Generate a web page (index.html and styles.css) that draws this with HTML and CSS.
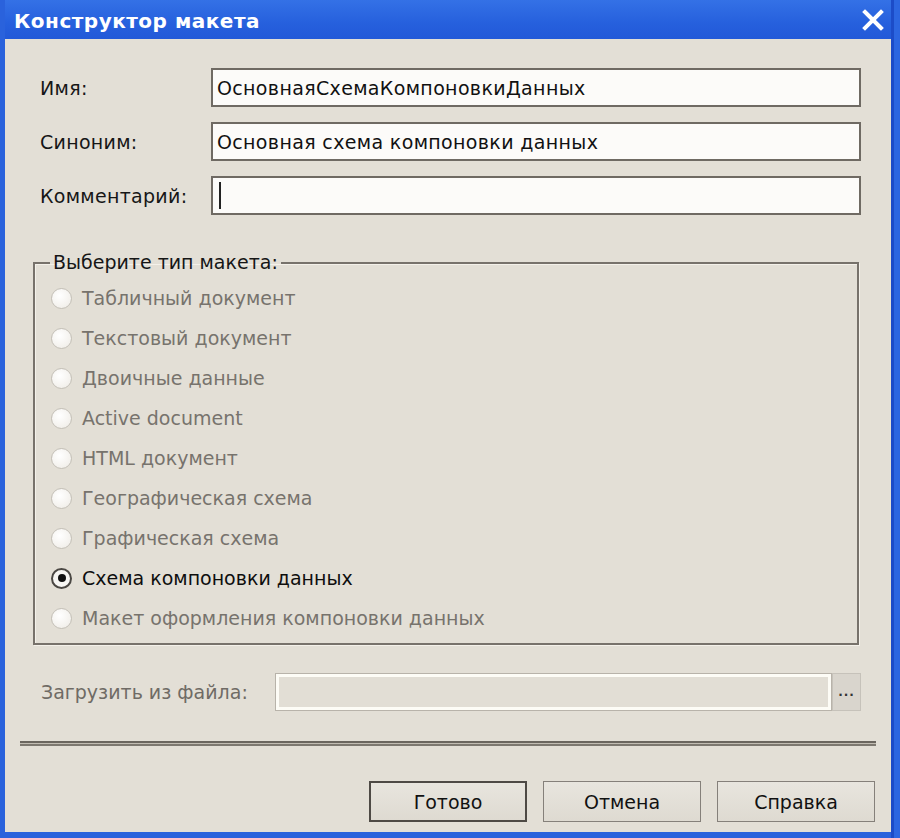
FILE: index.html
```html
<!DOCTYPE html>
<html lang="ru">
<head>
  <meta charset="UTF-8">
  <title>Конструктор макета</title>
  <link rel="stylesheet" href="styles.css">
</head>
<body>
  <div class="window">
    <!-- Title bar -->
    <div class="titlebar">
      <span class="title">Конструктор макета</span>
      <svg class="close" width="22" height="22" viewBox="0 0 22 22">
        <path d="M3 3 L19 19 M19 3 L3 19" stroke="#fff" stroke-width="4" stroke-linecap="square"/>
      </svg>
    </div>

    <div class="panel">
      <!-- Name fields -->
      <div class="fields">
        <div class="label">Имя:</div>
        <div class="edit">ОсновнаяСхемаКомпоновкиДанных</div>
        <div class="label">Синоним:</div>
        <div class="edit">Основная схема компоновки данных</div>
        <div class="label">Комментарий:</div>
        <div class="edit"><span class="caret"></span></div>
      </div>

      <!-- Type group -->
      <fieldset class="group">
        <legend>Выберите тип макета:</legend>
        <div class="radio"><span class="dot"></span>Табличный документ</div>
        <div class="radio"><span class="dot"></span>Текстовый документ</div>
        <div class="radio"><span class="dot"></span>Двоичные данные</div>
        <div class="radio"><span class="dot"></span>Active document</div>
        <div class="radio"><span class="dot"></span>HTML документ</div>
        <div class="radio"><span class="dot"></span>Географическая схема</div>
        <div class="radio"><span class="dot"></span>Графическая схема</div>
        <div class="radio checked"><span class="dot"></span>Схема компоновки данных</div>
        <div class="radio"><span class="dot"></span>Макет оформления компоновки данных</div>
      </fieldset>

      <!-- Load from file -->
      <div class="file-row">
        <div class="file-label">Загрузить из файла:</div>
        <div class="file-edit"></div>
        <div class="file-btn">...</div>
      </div>

      <div class="separator"></div>

      <!-- Buttons -->
      <div class="buttons">
        <div class="btn default">Готово</div>
        <div class="btn">Отмена</div>
        <div class="btn">Справка</div>
      </div>
    </div>
  </div>
</body>
</html>
```

FILE: styles.css
```css
* {
  margin: 0;
  padding: 0;
  box-sizing: border-box;
}

body {
  font-family: "DejaVu Sans", "Liberation Sans", sans-serif;
  font-size: 19px;
  background: #2a62dc;
}

.window {
  width: 900px;
  height: 838px;
  background: #2a62dc;
  display: flex;
  flex-direction: column;
  padding: 0 9px 6px 5px;
  box-shadow: inset -6px 0 0 #2c66e0, inset -9px 0 0 #1c4cc8;
}

.titlebar {
  height: 39px;
  display: flex;
  align-items: center;
  justify-content: space-between;
  padding: 0 7px 0 9px;
  background: linear-gradient(#3471e6, #2660dd 60%, #2259d8);
}

.title {
  color: #fff;
  font-weight: bold;
  font-size: 20px;
  letter-spacing: 0.5px;
  margin-top: 2px;
}

.close {
  display: block;
}

.panel {
  flex: 1;
  background: #e3dfd6;
  padding: 29px 30px 0 28px;
}

.fields {
  display: grid;
  grid-template-columns: 171px 1fr;
  row-gap: 15px;
  padding-left: 7px;
}

.label {
  color: #161616;
  display: flex;
  align-items: center;
  letter-spacing: 0.3px;
}

.edit {
  height: 39px;
  background: #fcfbf9;
  border: 2px solid #6f6a63;
  padding-left: 4px;
  display: flex;
  align-items: center;
  color: #111;
  letter-spacing: 0.35px;
}

.caret {
  width: 2px;
  height: 27px;
  background: #222;
  margin-left: 2px;
}

.group {
  margin: 36px 2px 0 0;
  border: 2px solid #77726b;
  box-shadow: inset 1px 1px 0 #f4f1ea, 1px 1px 0 #f4f1ea;
  padding: 4px 0 5px 15px;
}

.group legend {
  padding: 0 3px;
  line-height: 23px;
  color: #161616;
}

.radio {
  height: 40px;
  display: flex;
  align-items: center;
  color: #77736d;
}

.dot {
  width: 21px;
  height: 21px;
  border-radius: 50%;
  border: 1px solid #c3bfb7;
  background: radial-gradient(circle at 40% 35%, #ffffff, #eeebe5);
  margin: 0 10px 0 1px;
  display: flex;
  align-items: center;
  justify-content: center;
}

.radio.checked {
  color: #0e0e0e;
}

.radio.checked .dot {
  border: 2px solid #4a4743;
  background: #f7f6f3;
}

.radio.checked .dot::after {
  content: "";
  width: 8px;
  height: 8px;
  border-radius: 50%;
  background: #111;
}

.file-row {
  display: flex;
  align-items: center;
  margin-top: 28px;
  padding-left: 8px;
}

.file-label {
  width: 234px;
  color: #6f6b65;
}

.file-edit {
  width: 557px;
  height: 38px;
  border: 1px solid #b8b3aa;
  box-shadow: inset 0 0 0 3px #fdfcf6;
  background: #e2ded5;
}

.file-btn {
  width: 29px;
  height: 38px;
  border: 1px solid #c6c2ba;
  background: #d9d5cd;
  color: #333;
  font-size: 12px;
  font-weight: bold;
  display: flex;
  align-items: center;
  justify-content: center;
  letter-spacing: 1px;
}

.separator {
  margin: 30px -15px 0 -13px;
  height: 5px;
  border-top: 2px solid #6b665f;
  border-bottom: 2px solid #7d7870;
  background: #c2bdb3;
}

.buttons {
  display: flex;
  justify-content: flex-end;
  gap: 16px;
  margin: 35px -14px 0 0;
}

.btn {
  width: 158px;
  height: 41px;
  border: 1px solid #85807a;
  background: linear-gradient(#e8e5de, #dedad1);
  display: flex;
  align-items: center;
  justify-content: center;
  color: #111;
}

.btn.default {
  border: 2px solid #4e4a45;
}
```
